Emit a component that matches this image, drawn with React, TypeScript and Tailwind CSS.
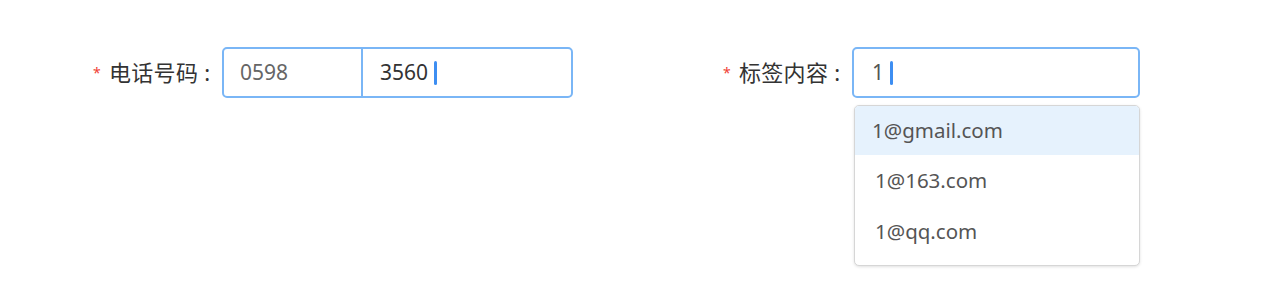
import { useState } from 'react';

const suggestions = ['1@gmail.com', '1@163.com', '1@qq.com'];

function Label({ text }: { text: string }) {
  return (
    <label className="flex w-[129px] shrink-0 items-center text-[22px] text-[#333]">
      <span className="mr-[7px] w-[9px] text-[14px] leading-none text-[#f04134]">*</span>
      <span className="tracking-[0.3px]">{text}</span>
      <span className="ml-[6px]">:</span>
    </label>
  );
}

function Caret() {
  return <span className="ml-[6px] inline-block h-[24px] w-[3px] rounded-sm bg-[#3d8ef2]" />;
}

export default function App() {
  const [active] = useState(0);

  return (
    <div
      className="h-[298px] w-[1280px] bg-white"
      style={{ fontFamily: '"Noto Sans", "Noto Sans CJK SC", sans-serif' }}
    >
      <div className="flex items-center pl-[93px] pt-[47px]">
        {/* phone */}
        <div className="flex items-center">
          <Label text="电话号码" />
          <div className="flex h-[51px] w-[351px] rounded-[5px] border-2 border-[#7ab6f6] text-[21px]">
            <div className="flex w-[139px] items-center border-r-2 border-[#7ab6f6] pl-[16px] text-[#666]">
              0598
            </div>
            <div className="flex flex-1 items-center pl-[17px] text-[#333]">
              3560
              <Caret />
            </div>
          </div>
        </div>

        {/* tag */}
        <div className="ml-[150px] flex items-center">
          <Label text="标签内容" />
          <div className="relative">
            <div className="flex h-[51px] w-[288px] items-center rounded-[5px] border-2 border-[#7ab6f6] pl-[18px] text-[21px] text-[#555]">
              1
              <Caret />
            </div>
            <ul className="absolute left-[2px] top-[58px] w-[286px] overflow-hidden rounded-[5px] border border-[#d6d6d6] bg-white pb-[8px] shadow-[0_1px_3px_rgba(0,0,0,0.12)]">
              {suggestions.map((s, i) => (
                <li
                  key={s}
                  className={
                    i === active
                      ? 'flex h-[49px] items-center bg-[#e6f2fd] pl-[17px] text-[20.5px] text-[#555]'
                      : 'flex h-[51px] items-center pl-[20px] text-[20.5px] text-[#555]'
                  }
                >
                  {s}
                </li>
              ))}
            </ul>
          </div>
        </div>
      </div>
    </div>
  );
}
